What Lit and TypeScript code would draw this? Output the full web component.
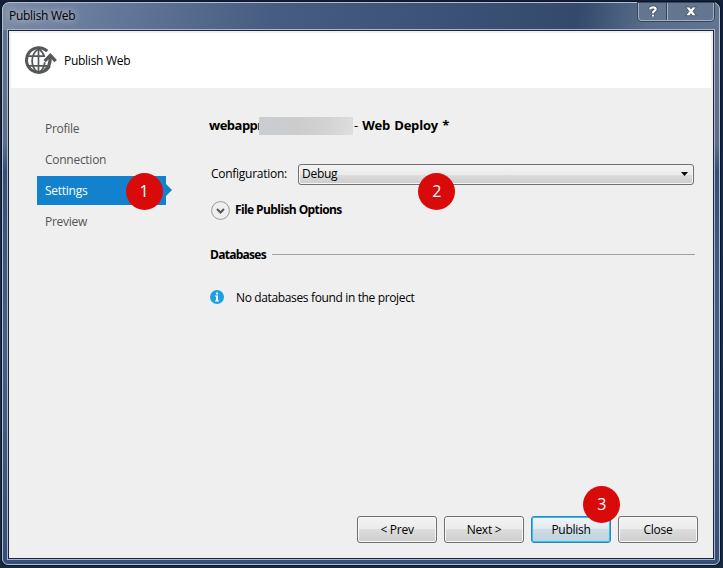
import { LitElement, html, css, svg } from "lit";
import { customElement, property, state } from "lit/decorators.js";
import { classMap } from "lit/directives/class-map.js";

@customElement("step-badge")
class StepBadge extends LitElement {
  @property({ type: Number }) step = 1;
  static styles = css`
    :host {
      display: flex; align-items: center; justify-content: center;
      width: 37px; height: 37px; border-radius: 50%;
      background: #d80a0a; color: #fff;
      font: 16px/20px "Open Sans", "Noto Sans", sans-serif;
    }
  `;
  render() { return html`<span>${this.step}</span>`; }
}

@customElement("push-button")
class PushButton extends LitElement {
  @property() label = "";
  @property({ type: Boolean, reflect: true }) primary = false;
  static styles = css`
    :host {
      box-sizing: border-box; width: 80px; height: 27px;
      display: flex; align-items: center; justify-content: center;
      border: 1px solid #707070; border-radius: 3px;
      background: linear-gradient(#f3f3f3, #ebebeb 50%, #dddddd 50%, #cdcdcd);
      box-shadow: inset 0 0 0 1px #f8f8f8;
      color: #000;
    }
    :host([primary]) {
      border-color: #3c7fb1;
      background: linear-gradient(#eef3f6, #e2eaef 50%, #cddde6 50%, #bdd2dd);
      box-shadow: inset 0 0 0 1px #1fc4f8;
    }
  `;
  render() { return html`<span>${this.label}</span>`; }
}

@customElement("app-root")
class AppRoot extends LitElement {
  @state() private tabs = ["Profile", "Connection", "Settings", "Preview"];
  @state() private active = "Settings";

  static styles = css`
    :host {
      display: block; position: relative; box-sizing: border-box;
      width: 723px; height: 568px; padding: 2px 3px 3px 2px; overflow: hidden;
      background: linear-gradient(#131f38, #1b2d50 50%, #17283f);
      font: 12px/16px "Open Sans", "Noto Sans", sans-serif;
      letter-spacing: -0.27px; color: #000;
    }
    .window {
      box-sizing: border-box; height: 563px; padding: 0 4px 4px;
      border: 1px solid #b4c0cf; border-radius: 7px 7px 6px 6px;
      background:
        linear-gradient(100deg, #7c8ca6 0, #66789a 15%, #465c80 38%, #3a5175 65%, #34496b 80%, #5a6e8b 90%, #62758f 100%) 0 0 / 100% 27px no-repeat,
        linear-gradient(#62758f, #5b6f8c 25%, #34507a 30%, #456088 60%, #34507a);
      box-shadow: 0 0 0 1px #0d1626;
    }
    .titlebar { height: 26px; display: flex; justify-content: space-between; }
    .title { padding: 5px 0 0 2px; height: 16px; text-shadow: 0 0 6px #ffffff90, 0 0 10px #ffffff70; }
    .controls {
      display: flex; height: 17px; margin-right: 1px; border: 1px solid #a3b0c0; border-top: 0;
      border-radius: 0 0 4px 4px; box-shadow: 0 0 0 1px #33455f; background: #64768f;
    }
    .control { display: flex; width: 28px; align-items: center; justify-content: center; }
    .control.close { width: 45px; border-left: 1px solid #a3b0c0; box-shadow: -1px 0 #33455f; }
    .content {
      box-sizing: border-box; height: 531px; border: 1px solid #a9b6c8; display: flex;
    }
    .client {
      flex: 1; box-sizing: border-box; border: 1px solid #17243a; background: #efefef;
      padding: 2px 2px 0;
    }
    .header { height: 55px; background: #fff; display: flex; align-items: center; padding-left: 13px; gap: 7px; }
    .body { display: flex; }
    .nav { width: 129px; margin: 26px 0 0 26px; display: flex; flex-direction: column; gap: 2px; }
    .tab { height: 29px; line-height: 30px; padding-left: 8px; color: #555; position: relative; }
    .tab.active { background: #1382ce; color: #fff; }
    .tab.active::after {
      content: ""; position: absolute; left: 129px; top: 8px;
      border: 6px solid transparent; border-right: 0; border-left-color: #1382ce;
    }
    .main { width: 486px; margin: 28px 0 0 43px; display: flex; flex-direction: column; }
    .deploy { display: flex; height: 18px; font-weight: 700; font-size: 13px; line-height: 18px; letter-spacing: -0.45px; }
    .name { width: 50px; letter-spacing: -0.5px; }
    .mask { width: 94px; height: 18px; margin-top: 1px; position: relative; background: linear-gradient(100deg, #c9ced3, #cccccd 40%, #d2d2d2 70%, #dedede); }
    .kind { margin-left: 1px; white-space: pre; letter-spacing: -0.2px; word-spacing: 1px; }
    .dash { font-weight: 400; }
    .config { display: flex; align-items: center; height: 22px; margin-top: 29px; padding-left: 2px; }
    .config-label { width: 87px; }
    .select {
      box-sizing: border-box; width: 396px; height: 21px; padding: 0 5px 0 3px;
      display: flex; align-items: center; justify-content: space-between;
      border: 1px solid #707070; border-radius: 3px;
      background: linear-gradient(#f3f3f3, #ebebeb 50%, #dddddd 50%, #cdcdcd);
      box-shadow: inset 0 0 0 1px #f4f4f4;
    }
    .options { display: flex; align-items: center; gap: 5px; margin-top: 15px; height: 20px; padding-left: 2px; font-weight: 700; }
    .bold { font-weight: 700; letter-spacing: -0.6px; }
    .databases .bold { letter-spacing: -0.72px; }
    .databases { display: flex; align-items: center; height: 16px; margin-top: 27px; padding-left: 1px; gap: 6px; }
    .rule { flex: 1; height: 1px; background: #a0a0a0; position: relative; top: -1px; }
    .notice { display: flex; align-items: center; gap: 12px; height: 18px; margin-top: 26px; padding-left: 1px; letter-spacing: -0.36px; }
    .notice svg { margin-bottom: 2px; }
    .buttons { position: absolute; left: 357px; top: 516px; display: flex; gap: 7px; }
    svg { display: block; flex: none; }
    .one, .two, .three { position: absolute; }
    .one { left: 125.5px; top: 172.5px; }
    .two { left: 418.3px; top: 172.5px; }
    .three { left: 583.3px; top: 485.5px; }
  `;

  private globe() {
    return html`<svg width="33" height="30" viewBox="0 0 33 30" fill="none" stroke="#555759">
      ${svg`<path d="M23.300 5.200A12.300 12.300 0 1 0 25.500 20" stroke-width="3"/>
      <path d="M14.500 2.600v24.600M3 10.200h18M3 19.800h20" stroke-width="1.700"/>
      <path d="M14.500 2.600C6 9 6 21 14.500 27.200M14.500 2.600c3 2.200 4.700 4.600 5.500 7.600M14.500 27.200c4-3 6-7 6.200-11" stroke-width="1.800"/>
      <path d="M20.500 24.500c4.500-2.500 5.800-7 5.800-14" stroke-width="3.300"/>
      <path d="M20.600 15.200l5.700-5.800 5.400 5.800" stroke-width="3.300"/>`}
    </svg>`;
  }

  render() {
    return html`
      <div class="window">
        <div class="titlebar">
          <span class="title">Publish Web</span>
          <div class="controls">
            <div class="control">
              <svg width="10" height="13" viewBox="0 0 10 13"><path d="M2.300 4.200V3.700Q2.300 2.400 5 2.400t2.700 1.800Q7.700 5.300 6 6.200 5 6.900 5 8.300M5 9.700v1.900" fill="none" stroke="#3b4657" stroke-width="3.600"/><path d="M2.300 4.200V3.700Q2.300 2.400 5 2.400t2.700 1.800Q7.700 5.300 6 6.200 5 6.900 5 8.300M5 9.700v1.900" fill="none" stroke="#fff" stroke-width="2.200"/></svg>
            </div>
            <div class="control close">
              <svg width="12" height="11" viewBox="0 0 12 11"><path d="M.7 1h3.800L6 2.900 7.500 1h3.800L8 5.300l3.300 4.400H7.500L6 7.800 4.500 9.700H.7L4 5.300z" fill="#fff" stroke="#3b4657" stroke-width=".8"/></svg>
            </div>
          </div>
        </div>
        <div class="content"><div class="client">
          <div class="header">${this.globe()}<span>Publish Web</span></div>
          <div class="body">
            <div class="nav">
              ${this.tabs.map((t) => html`<div class=${classMap({ tab: true, active: t === this.active })}>${t}</div>`)}
            </div>
            <div class="main">
              <div class="deploy"><span class="name">webappr</span><span class="mask"></span><span class="kind"><span class="dash">-</span> Web Deploy *</span></div>
              <div class="config">
                <span class="config-label">Configuration:</span>
                <div class="select"><span>Debug</span>
                  <svg width="7" height="4" viewBox="0 0 7 4"><path d="M0 0h7L3.500 4z" fill="#000"/></svg>
                </div>
              </div>
              <div class="options">
                <svg width="19" height="19" viewBox="0 0 19 19" fill="none"><circle cx="9.500" cy="9.500" r="8.900" stroke="#999"/><path d="M6 8l3.500 3.500L13 8" stroke="#555" stroke-width="2"/></svg>
                <span class="bold">File Publish Options</span>
              </div>
              <div class="databases"><span class="bold">Databases</span><span class="rule"></span></div>
              <div class="notice">
                <svg width="14" height="14" viewBox="0 0 14 14"><circle cx="7" cy="7" r="7" fill="#1ba1e2"/><path d="M6 2.500h2v2H6zM5 5.500h3v5h1v1H5v-1h1v-4H5z" fill="#fff"/></svg>
                <span>No databases found in the project</span>
              </div>
            </div>
          </div>
        </div></div>
      </div>
      <div class="buttons">
        <push-button label="&lt; Prev"></push-button>
        <push-button label="Next &gt;"></push-button>
        <push-button label="Publish" primary></push-button>
        <push-button label="Close"></push-button>
      </div>
      <step-badge class="one" .step=${1}></step-badge>
      <step-badge class="two" .step=${2}></step-badge>
      <step-badge class="three" .step=${3}></step-badge>
    `;
  }
}
